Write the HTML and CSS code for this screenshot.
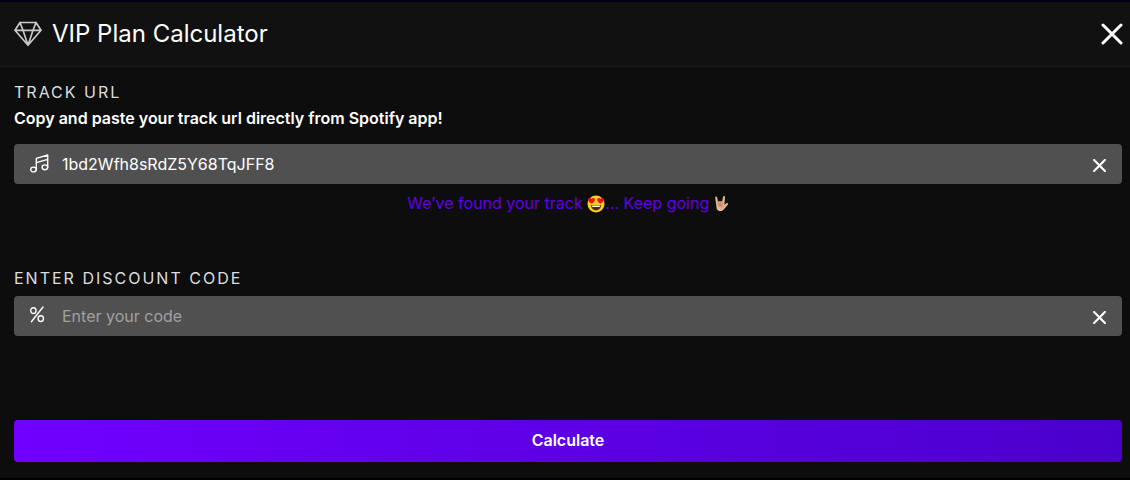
FILE: index.html
```html
<!DOCTYPE html>
<html lang="en">
<head>
<meta charset="utf-8">
<meta name="viewport" content="width=device-width, initial-scale=1">
<title>VIP Plan Calculator</title>
<link rel="stylesheet" href="styles.css">
</head>
<body>
<main class="modal">
  <header class="modal-header">
    <svg class="gem" viewBox="0 0 28 26" aria-hidden="true"><path d="M6 1.5H22L27 9.3L14 24.3L1 9.3ZM1 9.3H27M6 1.5L9 9.3L14 24.3L19 9.3L22 1.5"/></svg>
    <h1 class="title">VIP Plan Calculator</h1>
    <button class="close" type="button" aria-label="Close"><svg viewBox="0 0 22 22" aria-hidden="true"><path d="M2 2L20 20M20 2L2 20"/></svg></button>
  </header>
  <form class="modal-body">
    <section class="group">
      <label class="label" for="track">TRACK URL</label>
      <p class="help">Copy and paste your track url directly from Spotify app!</p>
      <div class="field field-track">
        <svg class="field-icon" viewBox="0 0 20 20" aria-hidden="true"><ellipse cx="3.5" cy="15.5" rx="2.8" ry="2.4"/><ellipse cx="14.9" cy="13.3" rx="2.8" ry="2.4"/><path d="M6.3 15.5V4.3L17.7 1V13.3M6.3 8.7L17.7 5.4"/></svg>
        <input class="input" id="track" type="text" value="1bd2Wfh8sRdZ5Y68TqJFF8">
        <button class="clear" type="button" aria-label="Clear track"><svg viewBox="0 0 12 12" aria-hidden="true"><path d="M1 1L11 11M11 1L1 11"/></svg></button>
      </div>
      <p class="status">We’ve found your track
        <svg class="emoji" viewBox="0 0 18 18" role="img" aria-label="Smiling face with heart eyes"><circle cx="9" cy="9" r="8.5" fill="#fc2"/><path d="M4 10H14C14 17 4 17 4 10Z" fill="#4b2b20"/><path d="M4.8 10.4H13.2L12.6 12H5.4Z" fill="#fff"/><path d="M4.8 8.8C2.4 7.4 .6 5.9 1.2 4C1.9 2.3 3.9 2.5 4.6 3.9C5.6 2.5 7.6 2.9 7.8 4.6C7.9 6.3 6.5 7.8 4.8 8.8ZM13.2 8.8C15.6 7.4 17.4 5.9 16.8 4C16.1 2.3 14.1 2.5 13.4 3.9C12.4 2.5 10.4 2.9 10.2 4.6C10.1 6.3 11.5 7.8 13.2 8.8Z" fill="#f21010"/></svg>... Keep going
        <svg class="emoji hand" viewBox="0 0 15 18" role="img" aria-label="Love-you gesture"><path d="M1.2 2.8C1.1 1.2 3 1.2 3.2 2.6L3.9 6.3H8.2L9 2C9.3 .5 11.2 .9 11 2.4L10.3 10L12.3 8.3C13.8 7.2 14.8 8.8 13.6 9.9L9.5 14.8C7.5 17 3.5 16.3 2.7 13.8Z" fill="#e8b792"/><path d="M4 6.3V10H6V6.3M6.1 6.3V10H8.2V6.3M4.5 11.3L8.5 10.7L7.5 13" fill="none" stroke="#a5714f" stroke-width=".6"/></svg></p>
    </section>
    <section class="group group-code">
      <label class="label" for="code">ENTER DISCOUNT CODE</label>
      <div class="field field-code">
        <svg class="field-icon" viewBox="0 0 20 20" aria-hidden="true"><ellipse cx="3.4" cy="4.6" rx="2.7" ry="2.9"/><ellipse cx="10.8" cy="12.6" rx="2.7" ry="2.9"/><path d="M13 1L1.4 15.8"/></svg>
        <input class="input" id="code" type="text" placeholder="Enter your code">
        <button class="clear" type="button" aria-label="Clear code"><svg viewBox="0 0 12 12" aria-hidden="true"><path d="M1 1L11 11M11 1L1 11"/></svg></button>
      </div>
    </section>
    <button class="submit" type="button">Calculate</button>
  </form>
</main>
</body>
</html>
```

FILE: styles.css
```css
* { box-sizing: border-box; }
body {
  margin: 0;
  padding: 2px 0;
  background: linear-gradient(#040018 2px, #000 2px);
  color: #fff;
  font: 16px/24px Inter, "Liberation Sans", sans-serif;
}
h1, p { margin: 0; }
button { border: 0; padding: 0; color: inherit; font: inherit; cursor: pointer; }
svg { fill: none; stroke-linecap: round; stroke-linejoin: round; }
.modal { background: #0d0d0d; }
.modal-header {
  display: flex;
  align-items: center;
  min-height: 65px;
  padding: 0 8px 0 14px;
  background: #111;
  border-bottom: 1px solid #191919;
}
.gem { width: 28px; height: 26px; stroke: #c8c8c8; stroke-width: 1.7; }
.title { flex: 1; margin-left: 10px; font-size: 24px; line-height: 32px; font-weight: 400; }
.close { display: flex; margin-right: -1px; background: none; }
.close svg { width: 22px; height: 22px; stroke: #fff; stroke-width: 3; }
.modal-body { padding: 13px 8px 16px 14px; }
.label { display: block; letter-spacing: 2px; color: #ddd; }
.help { margin-top: 2px; font-weight: 600; }
.field {
  display: flex;
  align-items: center;
  height: 40px;
  padding: 0 16px;
  background: #505050;
  border-radius: 4px;
}
.field-track { margin-top: 14px; }
.field-code { margin-top: 6px; }
.field-icon { width: 20px; height: 20px; stroke: #fff; stroke-width: 1.4; }
.input {
  flex: 1;
  min-width: 0;
  margin-left: 12px;
  padding: 0;
  border: 0;
  outline: 0;
  background: none;
  color: #fff;
  font: inherit;
}
.input::placeholder { color: #a0a0a0; opacity: 1; }
.clear { display: flex; padding-top: 2px; background: none; }
.clear svg { width: 13px; height: 13px; stroke: #fff; stroke-width: 2; }
.status { margin-top: 7px; color: #6200ea; text-align: center; }
.emoji { width: 18px; height: 18px; vertical-align: -4px; }
.hand { width: 15px; }
.group-code { margin-top: 51px; }
.submit {
  display: block;
  width: 100%;
  height: 42px;
  margin-top: 84px;
  padding-bottom: 2px;
  border-radius: 4px;
  background: linear-gradient(90deg, #7000ff, #4a00cc);
  font-weight: 600;
}
```
